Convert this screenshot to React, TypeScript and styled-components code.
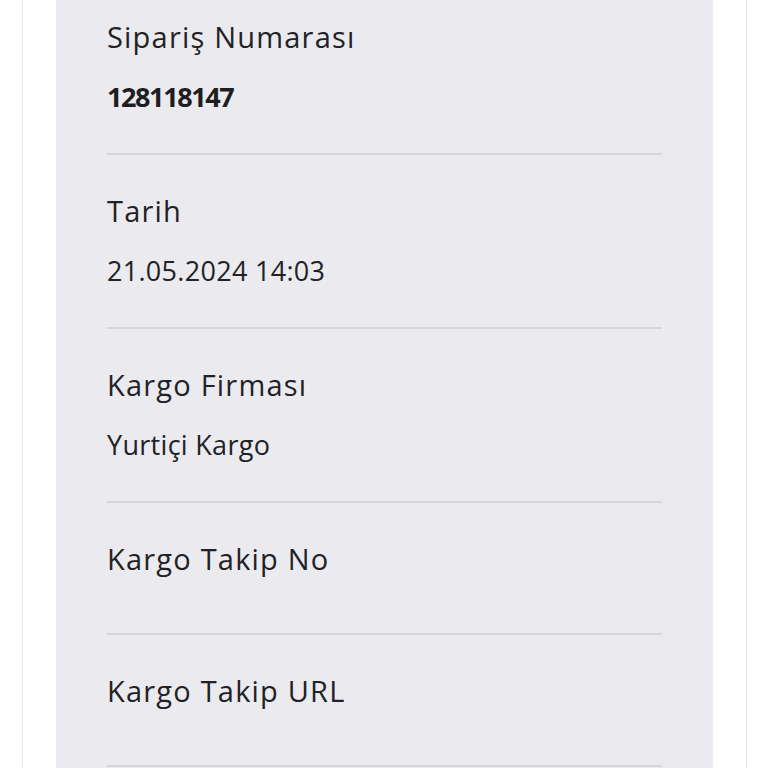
import styled, { createGlobalStyle } from "styled-components";

const GlobalStyle = createGlobalStyle`
  html, body {
    margin: 0;
    padding: 0;
    background: #ffffff;
    overflow: hidden;
  }
  body {
    font-family: "Open Sans", "Noto Sans", sans-serif;
    color: #222226;
  }
`;

const Screen = styled.div`
  width: 768px;
  height: 768px;
  overflow: hidden;
  padding: 0 21px 0 22px;
  box-sizing: border-box;
`;

const Card = styled.div`
  height: 100%;
  background: #ffffff;
  border-left: 1px solid #e6e6e8;
  border-right: 1px solid #e6e6e8;
  padding: 0 33px;
`;

const Panel = styled.div`
  height: 100%;
  background: #ebebef;
  padding: 0 51px;
`;

const Row = styled.div<{ $first?: boolean }>`
  padding-top: ${(p) => (p.$first ? "17px" : "36px")};
  padding-bottom: 34px;
  border-bottom: 2px solid #d6d6da;
`;

const Label = styled.div`
  font-size: 29px;
  line-height: 40px;
  letter-spacing: 1.2px;
`;

const Value = styled.div<{ $bold?: boolean }>`
  margin-top: 18px;
  min-height: 2px;
  font-size: 27px;
  line-height: 44px;
  letter-spacing: ${(p) => (p.$bold ? "-1.4px" : "0.3px")};
  font-weight: ${(p) => (p.$bold ? 700 : 400)};
  color: ${(p) => (p.$bold ? "#1e1e22" : "#222226")};
`;

const rows = [
  { label: "Sipariş Numarası", value: "128118147", bold: true },
  { label: "Tarih", value: "21.05.2024 14:03" },
  { label: "Kargo Firması", value: "Yurtiçi Kargo" },
  { label: "Kargo Takip No", value: "" },
  { label: "Kargo Takip URL", value: "" },
];

export default function App() {
  return (
    <>
      <GlobalStyle />
      <Screen>
        <Card>
          <Panel>
            {rows.map((r, i) => (
              <Row key={r.label} $first={i === 0}>
                <Label>{r.label}</Label>
                <Value $bold={r.bold}>{r.value}</Value>
              </Row>
            ))}
          </Panel>
        </Card>
      </Screen>
    </>
  );
}
